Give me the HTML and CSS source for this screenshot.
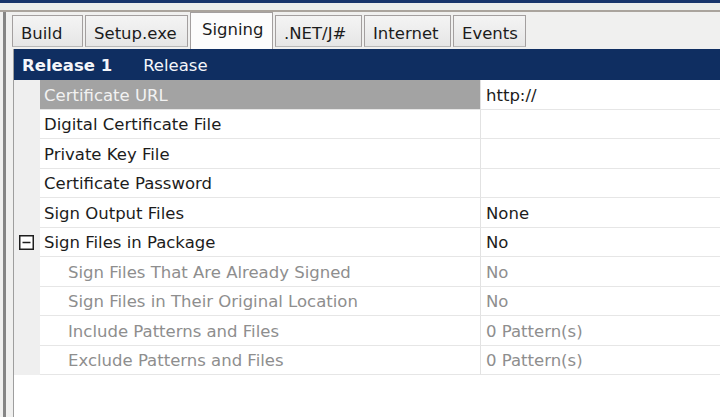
FILE: index.html
```html
<!DOCTYPE html>
<html>
<head>
<meta charset="utf-8">
<link rel="stylesheet" href="styles.css">
</head>
<body>
<div class="topbar"></div>
<div class="band"></div>
<div class="frame">
  <div class="tabstrip">
    <div class="tab">Build</div>
    <div class="tab">Setup.exe</div>
    <div class="tab active">Signing</div>
    <div class="tab">.NET/J#</div>
    <div class="tab">Internet</div>
    <div class="tab">Events</div>
  </div>
  <div class="panel">
    <div class="header">
      <span class="config">Release 1</span>
      <span class="platform">Release</span>
    </div>
    <div class="grid">
      <div class="row selected">
        <div class="gutter"></div>
        <div class="name">Certificate URL</div>
        <div class="value">http://</div>
      </div>
      <div class="row">
        <div class="gutter"></div>
        <div class="name">Digital Certificate File</div>
        <div class="value"></div>
      </div>
      <div class="row">
        <div class="gutter"></div>
        <div class="name">Private Key File</div>
        <div class="value"></div>
      </div>
      <div class="row">
        <div class="gutter"></div>
        <div class="name">Certificate Password</div>
        <div class="value"></div>
      </div>
      <div class="row">
        <div class="gutter"></div>
        <div class="name">Sign Output Files</div>
        <div class="value">None</div>
      </div>
      <div class="row">
        <div class="gutter">
          <svg class="toggle" width="15" height="15" viewBox="0 0 15 15"><rect x="0.75" y="0.75" width="13.5" height="13.5" fill="#fff" stroke="#1e1e1e" stroke-width="1.5"/><line x1="3.5" y1="7.5" x2="11.5" y2="7.5" stroke="#1e1e1e" stroke-width="1.5"/></svg>
        </div>
        <div class="name">Sign Files in Package</div>
        <div class="value">No</div>
      </div>
      <div class="row child">
        <div class="gutter"></div>
        <div class="name">Sign Files That Are Already Signed</div>
        <div class="value">No</div>
      </div>
      <div class="row child">
        <div class="gutter"></div>
        <div class="name">Sign Files in Their Original Location</div>
        <div class="value">No</div>
      </div>
      <div class="row child">
        <div class="gutter"></div>
        <div class="name">Include Patterns and Files</div>
        <div class="value">0 Pattern(s)</div>
      </div>
      <div class="row child">
        <div class="gutter"></div>
        <div class="name">Exclude Patterns and Files</div>
        <div class="value">0 Pattern(s)</div>
      </div>
    </div>
  </div>
</div>
</body>
</html>
```

FILE: styles.css
```css
html, body {
  margin: 0;
  padding: 0;
}
body {
  width: 720px;
  height: 417px;
  overflow: hidden;
  background: #f0f0ef;
  font-family: "DejaVu Sans", "Liberation Sans", sans-serif;
  font-size: 16.5px;
  color: #1c1c1c;
}
.topbar {
  height: 3px;
  background: #18366a;
}
.band {
  height: 7px;
  background: #eceeeb;
  border-bottom: 2px solid #aaa49d;
}
.frame {
  margin-left: 3px;
  border-left: 3px solid #858585;
  height: 405px;
  display: flex;
  flex-direction: column;
}
.tabstrip {
  height: 37px;
  padding-left: 6px;
  display: grid;
  grid-template-columns: 71px 103px 83px 87px 87px 73px;
  column-gap: 2px;
  align-items: end;
}
.tab {
  box-sizing: border-box;
  height: 32px;
  margin-bottom: 2px;
  padding: 5px 0 0 8px;
  line-height: 26px;
  border: 1px solid #a39f9f;
  border-bottom-color: #b8b8b8;
  background: linear-gradient(#f4f4f4, #e6e6e6);
  white-space: nowrap;
}
.tab.active {
  height: 37px;
  margin-bottom: 0;
  padding: 4px 0 0 11px;
  border-bottom: none;
  background: #fcfcfc;
}
.panel {
  flex: 1;
  margin-left: 7px;
  border-left: 1px solid #9e9e9e;
  background: #fff;
}
.header {
  box-sizing: border-box;
  height: 31px;
  background: #0f2e61;
  color: #f4f6fa;
  display: flex;
  align-items: center;
  padding: 4px 0 0 8px;
  gap: 31px;
  line-height: 1;
}
.config {
  font-weight: bold;
}
.grid {
  display: flex;
  flex-direction: column;
}
.row {
  display: grid;
  grid-template-columns: 26px 440px 1fr;
  height: 29.5px;
}
.gutter {
  background: #efefef;
  display: flex;
  align-items: center;
  padding-left: 5px;
}
.name, .value {
  box-sizing: border-box;
  border-bottom: 1px solid #e6e6e6;
  display: flex;
  align-items: center;
  white-space: nowrap;
  padding-top: 2px;
}
.name {
  padding-left: 4px;
}
.value {
  padding-left: 5px;
  border-left: 1px solid #e2e2e2;
}
.selected .name {
  background: #a3a3a3;
  color: #f2f2f2;
}
.child .name {
  padding-left: 28px;
  color: #8e8e8e;
}
.child .value {
  color: #8e8e8e;
}
.toggle {
  display: block;
}
```
